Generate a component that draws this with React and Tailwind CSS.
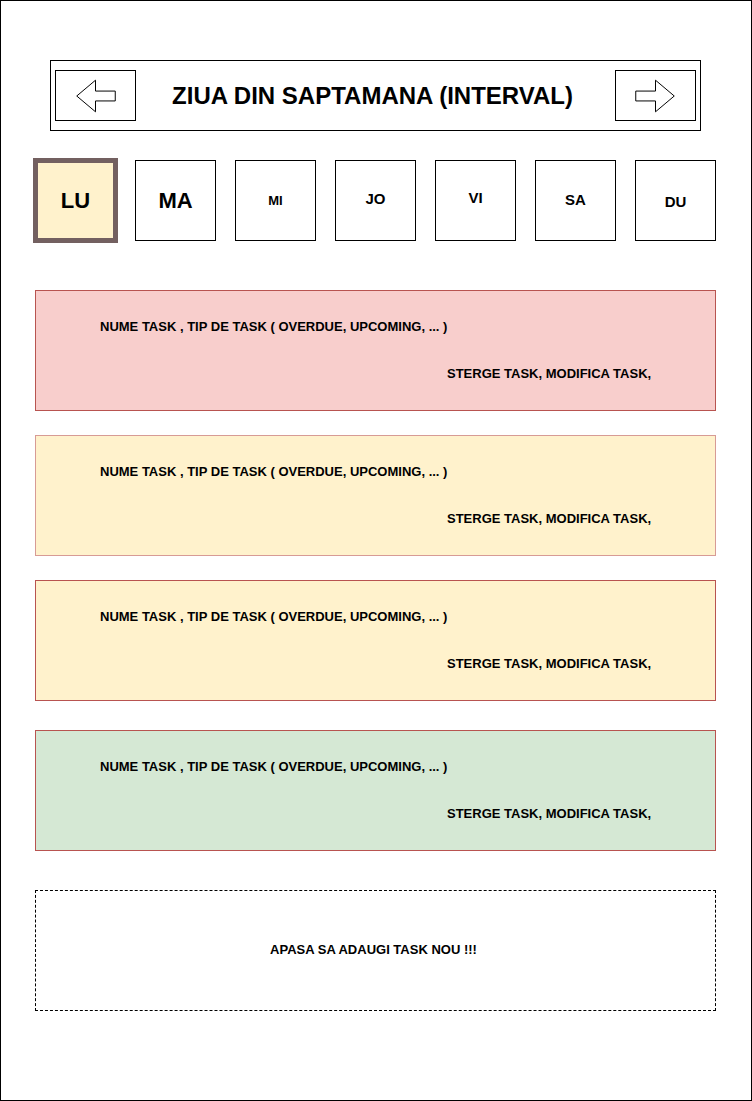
const days = [
  { label: "LU", size: "text-[22px]", active: true },
  { label: "MA", size: "text-[22px]" },
  { label: "MI", size: "text-[13px]" },
  { label: "JO", size: "text-[15px]", shift: "-translate-y-px" },
  { label: "VI", size: "text-[15px]", shift: "-translate-y-[2px]" },
  { label: "SA", size: "text-[15px]" },
  { label: "DU", size: "text-[15px]", shift: "translate-y-[2px]" },
];

const tasks = [
  { bg: "bg-[#f8cecc]", border: "border-[#b85450]", gap: "mt-[49px]" },
  { bg: "bg-[#fff2cc]", border: "border-[#d79b95]", gap: "mt-[24px]" },
  { bg: "bg-[#fff2cc]", border: "border-[#b85450]", gap: "mt-[24px]" },
  { bg: "bg-[#d5e8d4]", border: "border-[#b85450]", gap: "mt-[29px]" },
];

function Arrow({ dir = "left" }) {
  const pts =
    dir === "left"
      ? "21,25 40,9 40,20 60,20 60,30 40,30 40,41"
      : "59,25 40,9 40,20 20,20 20,30 40,30 40,41";
  return (
    <svg width="80" height="50" viewBox="0 0 80 50">
      <polygon points={pts} fill="#fff" stroke="#000" strokeWidth="1" strokeLinejoin="miter" />
    </svg>
  );
}

export default function App() {
  return (
    <div
      className="w-[752px] h-[1101px] border border-black bg-white text-black pt-[59px]"
      style={{ fontFamily: '"Liberation Sans", Arial, sans-serif' }}
    >
      {/* week header */}
      <div className="ml-[49px] mr-[50px] h-[71px] border border-black flex items-center justify-between px-[4px]">
        <div className="w-[81px] h-[51px] border border-black flex items-center justify-center">
          <Arrow dir="left" />
        </div>
        <div className="font-bold text-[24px] leading-none -translate-x-[3px]">
          ZIUA DIN SAPTAMANA (INTERVAL)
        </div>
        <div className="w-[81px] h-[51px] border border-black flex items-center justify-center">
          <Arrow dir="right" />
        </div>
      </div>

      {/* days */}
      <div className="mt-[29px] ml-[34px] flex items-center gap-[19px] h-[81px]">
        {days.map((d) =>
          d.active ? (
            <div
              key={d.label}
              className="w-[85px] h-[85px] -mx-[2px] border-[5px] border-[#736060] bg-[#fff2cc] flex items-center justify-center font-bold text-[22px]"
            >
              {d.label}
            </div>
          ) : (
            <div
              key={d.label}
              className={`w-[81px] h-[81px] border border-black flex items-center justify-center font-bold ${d.size}`}
            >
              <span className={d.shift}>{d.label}</span>
            </div>
          )
        )}
      </div>

      {/* tasks */}
      <div className="ml-[34px] mr-[35px]">
        {tasks.map((t, i) => (
          <div key={i} className={`${t.gap} h-[121px] border ${t.border} ${t.bg} text-[13px] font-bold leading-none`}>
            <div className="pl-[64px] pt-[29px]">NUME TASK , TIP DE TASK ( OVERDUE, UPCOMING, ... )</div>
            <div className="pl-[411px] pt-[34px]">STERGE TASK, MODIFICA TASK,</div>
          </div>
        ))}

        <div className="mt-[39px] h-[121px] border border-dashed border-black flex items-center justify-center text-[13px] font-bold">
          <span className="-translate-x-[2px] -translate-y-px">APASA SA ADAUGI TASK NOU !!!</span>
        </div>
      </div>
    </div>
  );
}
